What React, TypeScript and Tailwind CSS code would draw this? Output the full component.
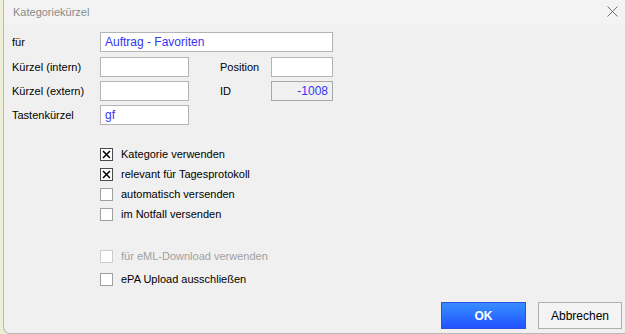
import React from "react";

const Field = ({ value, className, readOnly }: { value?: string; className: string; readOnly?: boolean }) => (
  <div
    className={`flex h-[20px] items-center border px-[4px] text-[12px] text-[#3535f0] ${
      readOnly ? "justify-end border-[#a8a8a8] bg-[#f0f0f0]" : "border-[#b4b4b4] bg-white"
    } ${className}`}
  >
    {value}
  </div>
);

const Check = ({ label, checked, disabled }: { label: string; checked?: boolean; disabled?: boolean }) => (
  <div className="flex h-[20px] items-center">
    <div
      className={`flex h-[13px] w-[13px] items-center justify-center border bg-white ${
        disabled ? "border-[#cccccc]" : checked ? "border-[#4a4a4a]" : "border-[#a0a0a0]"
      }`}
    >
      {checked && (
        <svg width="9" height="9" viewBox="0 0 9 9">
          <path d="M1 1 L8 8 M8 1 L1 8" stroke="#000" strokeWidth="1.5" />
        </svg>
      )}
    </div>
    <span className={`ml-[8px] text-[11px] ${disabled ? "text-[#a0a0a0]" : "text-black"}`}>{label}</span>
  </div>
);

export default function App() {
  return (
    <div className="flex h-[334px] w-[625px] bg-[#eeedd6]" style={{ fontFamily: '"Liberation Sans", Arial, sans-serif' }}>
      <div className="w-[3px]" />
      <div className="flex flex-1 flex-col overflow-hidden rounded-bl-[7px] border-b border-l border-[#b9b9b9] bg-[#f0f0f0]">
        <div className="flex h-[24px] items-center justify-between bg-[#f3f3f3] pl-[9px] pr-[7px]">
          <span className="text-[11px] text-[#8a8a8a]">Kategoriekürzel</span>
          <svg width="11" height="11" viewBox="0 0 11 11" className="mt-[-2px]">
            <path d="M0.5 0.5 L10.5 10.5 M10.5 0.5 L0.5 10.5" stroke="#707070" strokeWidth="1" />
          </svg>
        </div>

        <div className="flex flex-1 flex-col pl-[8px] pt-[8px]">
          <div className="flex items-center">
            <span className="w-[88px] text-[11px] text-black">für</span>
            <Field value="Auftrag - Favoriten" className="w-[233px] border-[#a0a0a0]" />
          </div>
          <div className="mt-[5px] flex items-center">
            <span className="w-[88px] text-[11px] text-black">Kürzel (intern)</span>
            <Field className="w-[89px]" />
            <span className="ml-[31px] w-[51px] text-[11px] text-black">Position</span>
            <Field className="w-[62px]" />
          </div>
          <div className="mt-[4px] flex items-center">
            <span className="w-[88px] text-[11px] text-black">Kürzel (extern)</span>
            <Field className="w-[89px]" />
            <span className="ml-[31px] w-[51px] text-[11px] text-black">ID</span>
            <Field value="-1008" readOnly className="w-[62px]" />
          </div>
          <div className="mt-[4px] flex items-center">
            <span className="w-[88px] text-[11px] text-black">Tastenkürzel</span>
            <Field value="gf" className="w-[89px]" />
          </div>

          <div className="ml-[88px] mt-[19px] flex flex-col">
            <Check label="Kategorie verwenden" checked />
            <Check label="relevant für Tagesprotokoll" checked />
            <Check label="automatisch versenden" />
            <Check label="im Notfall versenden" />
            <div className="mt-[22px]">
              <Check label="für eML-Download verwenden" disabled />
            </div>
            <div className="mt-[3px]">
              <Check label="ePA Upload ausschließen" />
            </div>
          </div>

          <div className="mt-auto flex justify-end gap-[12px] pb-[4px] pr-[3px]">
            <button className="h-[27px] w-[85px] border border-[#2c4fe0] bg-gradient-to-b from-[#3a8dff] to-[#2550ff] text-[12px] font-bold text-white">
              OK
            </button>
            <button className="h-[27px] w-[84px] border border-[#b0b0b0] bg-[#f3f3f3] text-[12px] text-black">
              Abbrechen
            </button>
          </div>
        </div>
      </div>
    </div>
  );
}
